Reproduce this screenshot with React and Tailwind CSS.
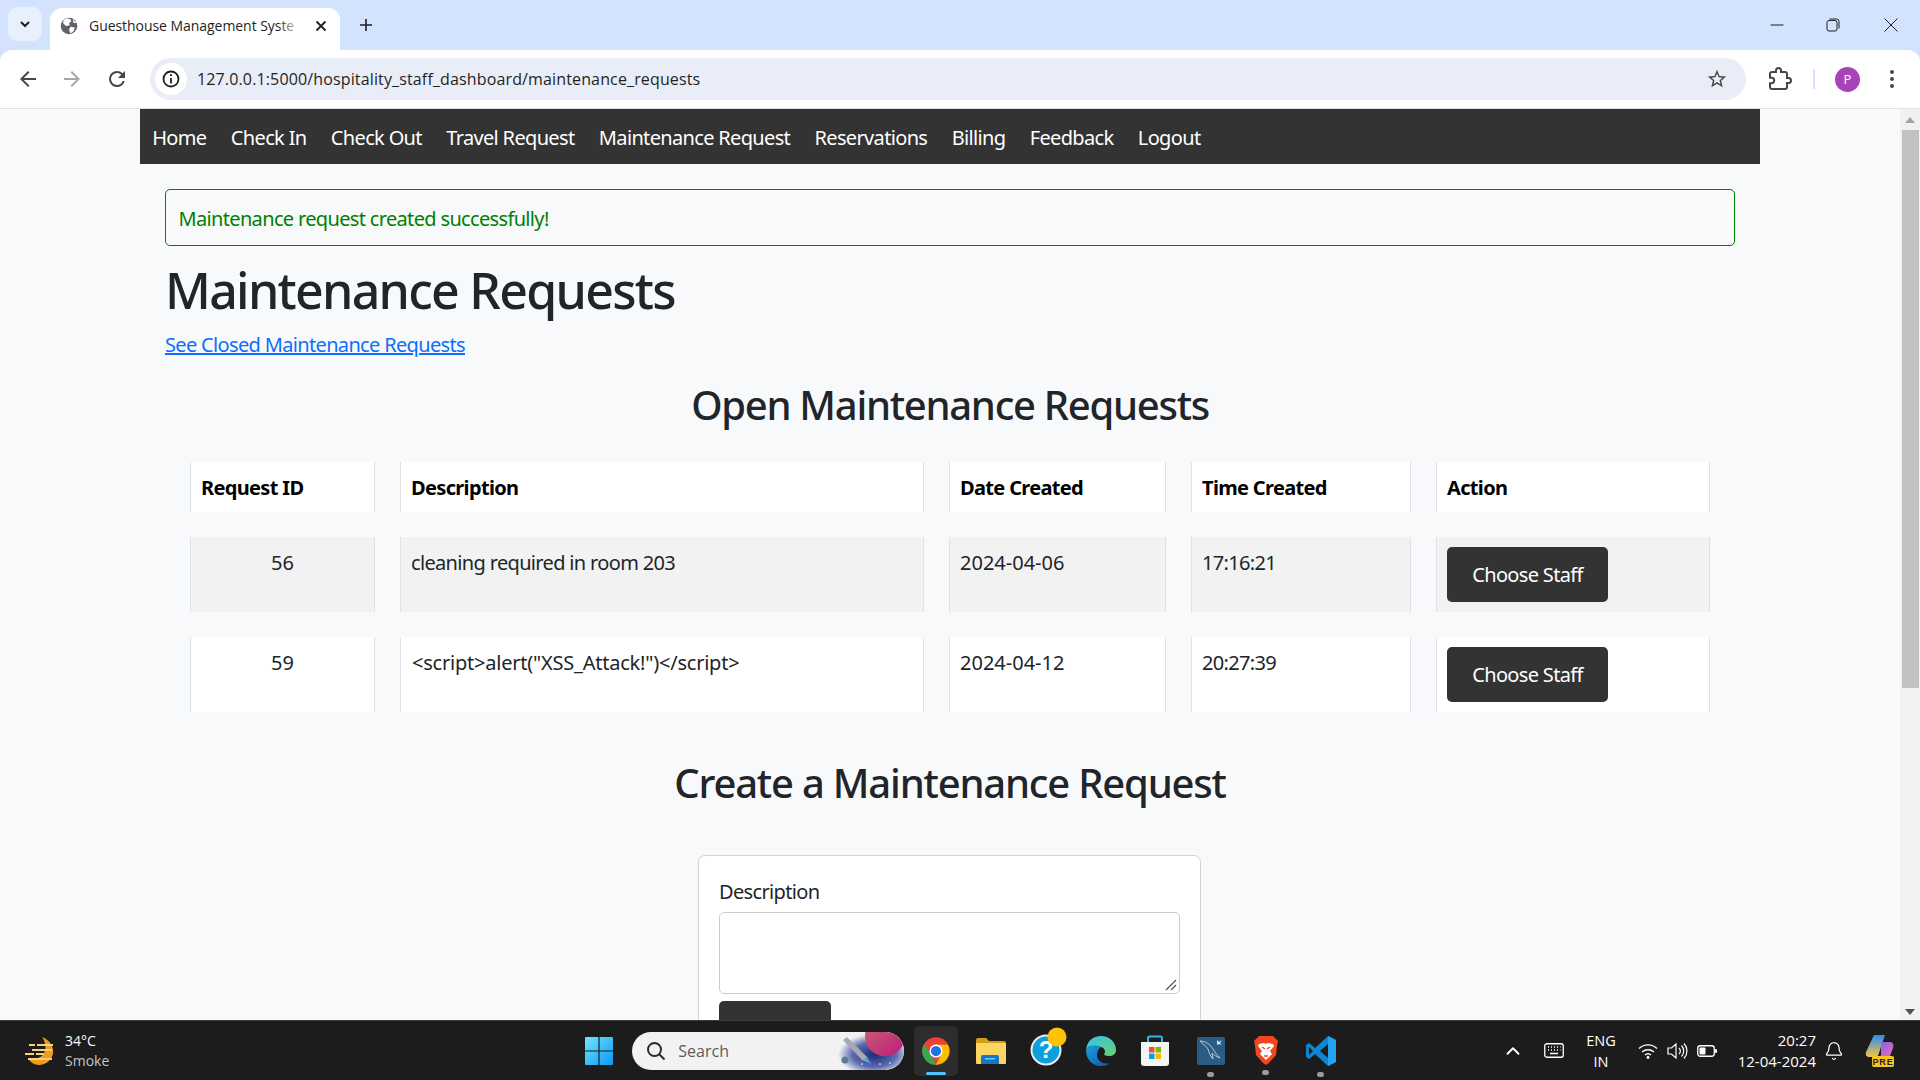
import { Bell, ChevronUp } from 'lucide-react';

const navItems = ['Home', 'Check In', 'Check Out', 'Travel Request', 'Maintenance Request', 'Reservations', 'Billing', 'Feedback', 'Logout'];

const rows = [
  { id: 56, desc: 'cleaning required in room 203', descCls: '', date: '2024-04-06', time: '17:16:21', bg: 'bg-[#f2f2f2]' },
  { id: 59, desc: '<script>alert("XSS_Attack!")</script>', descCls: 'tracking-[-0.011em] indent-[1px]', date: '2024-04-12', time: '20:27:39', bg: 'bg-white' },
];

const cellCls = 'border-x border-[#dee2e6] px-[10px] pt-[11px] pb-[9px] align-top';

const Chrome = () => (
  <svg width="30" height="30" viewBox="0 0 48 48">
    <circle cx="24" cy="24" r="22" fill="#ea4335" />
    <path d="M4.9 13 L15.4 29 L24 46 A22 22 0 0 1 4.9 13Z" fill="#34a853" />
    <path d="M24 14 H43.1 A22 22 0 0 1 24 46 L32.6 29Z" fill="#fbbc04" />
    <circle cx="24" cy="24" r="10.5" fill="#fff" />
    <circle cx="24" cy="24" r="8.2" fill="#1a73e8" />
  </svg>
);

const TabGlobe = () => (
  <svg width="18" height="18" viewBox="0 0 24 24">
    <circle cx="12" cy="12" r="11" fill="#5f6368" />
    <path d="M9 1.5 L14 3 L15 6 L12 8 L13 11 L8 12 L4 8 L5 4Z M14 13 L20 14 L18 19 L14 22 L12 17Z M17 3 L22 8 L18 8Z" fill="#fff" />
  </svg>
);

const Windows = () => (
  <svg width="30" height="30" viewBox="0 0 30 30">
    <defs>
      <linearGradient id="winGrad" x1="0" y1="0" x2="1" y2="1">
        <stop offset="0" stopColor="#72e4ff" />
        <stop offset="1" stopColor="#0a98f5" />
      </linearGradient>
    </defs>
    <path d="M1 2a1 1 0 0 1 1-1h12.4v13.4H1z M15.6 1H28a1 1 0 0 1 1 1v12.4H15.6z M1 15.6h13.4V29H2a1 1 0 0 1-1-1z M15.6 15.6H29V28a1 1 0 0 1-1 1H15.6z" fill="url(#winGrad)" />
  </svg>
);

const Folder = () => (
  <svg width="32" height="30" viewBox="0 0 32 30">
    <path d="M1 4a2 2 0 0 1 2-2h8l3 3h15a2 2 0 0 1 2 2v3H1z" fill="#d69e12" />
    <path d="M1 7h29a1 1 0 0 1 1 1v19a1 1 0 0 1-1 1H2a1 1 0 0 1-1-1z" fill="#fcd462" />
    <path d="M6 21a2 2 0 0 1 2-2h14a2 2 0 0 1 2 2v7H6z" fill="#1478c8" />
    <rect x="10" y="22" width="10" height="1.5" fill="#7cc4f4" />
  </svg>
);

const Help = () => (
  <svg width="38" height="40" viewBox="0 0 38 40">
    <circle cx="16" cy="23" r="14.5" fill="#0d9fdc" stroke="#e8eef2" strokeWidth="2" />
    <text x="16" y="31" textAnchor="middle" fontSize="24" fontWeight="700" fontFamily="Liberation Sans, sans-serif" fill="#fff">?</text>
    <circle cx="27" cy="10" r="9.5" fill="#ffc107" />
  </svg>
);

const Edge = () => (
  <svg width="32" height="32" viewBox="0 0 32 32">
    <defs>
      <linearGradient id="edgeA" x1="0" y1="0" x2="1" y2="1">
        <stop offset="0" stopColor="#35c1f1" />
        <stop offset="1" stopColor="#66d36e" />
      </linearGradient>
      <linearGradient id="edgeB" x1="0" y1="0" x2="1" y2="1">
        <stop offset="0" stopColor="#1b9de2" />
        <stop offset="1" stopColor="#0c59a4" />
      </linearGradient>
    </defs>
    <path d="M1 15C2 6 8 1 16 1c8 0 15 6 15 14 0 4-3 6-7 6-3 0-5-1-5-2 2-2 1-6-3-7C9 10 3 10 1 15Z" fill="url(#edgeA)" />
    <path d="M1 15c0 9 6 16 15 16 4 0 7-1 9-3-7 2-13-2-13-8 0-4 2-7 4-8C9 10 3 10 1 15Z" fill="url(#edgeB)" />
  </svg>
);

const Store = () => (
  <svg width="30" height="32" viewBox="0 0 30 32">
    <path d="M8 8V3a1.5 1.5 0 0 1 1.5-1.5h11A1.5 1.5 0 0 1 22 3v5" fill="none" stroke="#2fb5ec" strokeWidth="2" />
    <path d="M1 7h28v21a3 3 0 0 1-3 3H4a3 3 0 0 1-3-3z" fill="#f4f4f4" />
    <rect x="9" y="12" width="5.5" height="5.5" fill="#f25022" />
    <rect x="15.5" y="12" width="5.5" height="5.5" fill="#7fba00" />
    <rect x="9" y="18.5" width="5.5" height="5.5" fill="#00a4ef" />
    <rect x="15.5" y="18.5" width="5.5" height="5.5" fill="#ffb900" />
  </svg>
);

const MySql = () => (
  <svg width="30" height="30" viewBox="0 0 30 30">
    <rect x="1" y="1" width="28" height="28" rx="2" fill="#2b5d84" />
    <path d="M4 5c5 0 10 3 13 8 2 3 4 6 7 9-3-1-6-3-8-5l1 6c-2-2-4-6-5-10-2-3-5-5-8-8Z" fill="none" stroke="#b9cbd8" strokeWidth="1" />
    <path d="M21 4l2 2 3-2-2 3 2 2-3-1-2 1z" fill="#dfe8ee" />
  </svg>
);

const Brave = () => (
  <svg width="26" height="31" viewBox="0 0 26 31">
    <path d="M6 1h14l3 3 2 2-1 5-1 9-7 8-3 2-3-2-7-8-1-9-1-5 2-2z" fill="#f1461e" />
    <path d="M6 9l5-1 2 1 2-1 5 1 1 2-4 5 2 3-3 3-3 3-3-3-3-3 2-3-4-5z" fill="#fff" />
    <path d="M9 12l3 2M17 12l-3 2M11 21h4" stroke="#f1461e" strokeWidth="1.4" />
  </svg>
);

const VsCode = () => (
  <svg width="32" height="32" viewBox="0 0 32 32">
    <path d="M23 1 L31 5 V27 L23 31 L10 19 L4 24 L1 22 V10 L4 8 L10 13Z M23 9 L15 16 L23 23Z M4 12 V20 L8 16Z" fillRule="evenodd" fill="#0f85d1" />
    <path d="M23 1 L31 5 V27 L23 31Z M23 9 V23 L23 23Z" fill="#24a3ef" />
  </svg>
);

const Copilot = () => (
  <svg width="30" height="34" viewBox="0 0 30 34">
    <defs>
      <linearGradient id="copA" x1="0" y1="0" x2="0" y2="1">
        <stop offset="0" stopColor="#2b8bf0" />
        <stop offset="1" stopColor="#f3c544" />
      </linearGradient>
      <linearGradient id="copB" x1="0" y1="0" x2="1" y2="1">
        <stop offset="0" stopColor="#7a5ff0" />
        <stop offset="1" stopColor="#ef6fb0" />
      </linearGradient>
    </defs>
    <path d="M9 1h11l-6 18c-1 3-2 4-5 4H4c-2 0-4-2-3-5z" fill="url(#copA)" />
    <path d="M16 8h9c3 0 4 3 3 6l-3 8c-1 2-2 3-4 3H11c3 0 4-2 5-4z" fill="url(#copB)" />
    <rect x="7" y="22" width="22" height="11" rx="2" fill="#f7c325" />
    <text x="18" y="31" textAnchor="middle" fontSize="9" fontWeight="700" fontFamily="Liberation Sans, sans-serif" letterSpacing="0.8" fill="#222">PRE</text>
  </svg>
);

const Weather = () => (
  <svg width="32" height="30" viewBox="0 0 32 30">
    <path d="M18 1c8 3 12 10 11 17-2 7-8 11-14 11-5 0-9-3-11-7h10c8-2 10-13 4-21Z" fill="#f29a1f" />
    <path d="M5 8h6v2H5z M13 8h16v2H13z M8 13h20v2H8z M1 17h9v2H1z M12 17h8v2h-8z M4 22h24v2H4z" fill="#f5d37e" />
  </svg>
);

const Bloom = () => (
  <svg width="66" height="38" viewBox="0 0 66 38">
    <defs>
      <radialGradient id="bloomBg" cx="0.55" cy="0.6" r="0.55">
        <stop offset="0" stopColor="#1d2a78" />
        <stop offset="0.6" stopColor="#5c6cb0" />
        <stop offset="1" stopColor="#f2f2f2" />
      </radialGradient>
      <linearGradient id="planet" x1="0" y1="0" x2="1" y2="1">
        <stop offset="0" stopColor="#c86a6a" />
        <stop offset="1" stopColor="#c0187f" />
      </linearGradient>
    </defs>
    <rect x="0" y="0" width="66" height="38" fill="url(#bloomBg)" />
    <circle cx="47" cy="4" r="20" fill="url(#planet)" />
    <path d="M5 8 L9 5 L29 25 L29 30 L24 28Z" fill="#a9a9b4" />
    <path d="M25 28 L33 32 L29 25Z" fill="#4aa8e8" />
    <circle cx="7" cy="28" r="3.5" fill="#5a7b93" />
    <circle cx="24" cy="32" r="0.8" fill="#fff" />
    <circle cx="42" cy="32" r="0.8" fill="#fff" />
    <circle cx="52" cy="31" r="0.8" fill="#fff" />
  </svg>
);

const App = () => {
  return (
    <div className="flex h-screen flex-col overflow-hidden bg-[#f8f9fa] font-['Noto_Sans',sans-serif] text-[20px] leading-[30px] tracking-[-0.033em] text-[#212529]">
      {/* browser chrome */}
      <div className="h-[109px] shrink-0 bg-[#d3e3fd] tracking-normal">
        <div className="flex h-[50px] items-end">
          <div className="mb-[9px] ml-[8px] flex h-[34px] w-[34px] items-center justify-center rounded-[9px] bg-[#e8effd]">
            <svg width="12" height="12" viewBox="0 0 12 12"><path d="M2 4l4 4 4-4" fill="none" stroke="#1f1f1f" strokeWidth="2" /></svg>
          </div>
          <div className="ml-[8px] flex h-[42px] w-[290px] items-center rounded-t-[12px] bg-white pb-[6px] pl-[10px] text-[#1f1f1f]">
            <TabGlobe />
            <div className="relative ml-[11px] w-[213px] whitespace-nowrap font-['Open_Sans',sans-serif] text-[14px] tracking-[-0.05px]">
              Guesthouse Management Syste
              <div className="absolute right-0 top-0 h-full w-[24px] bg-gradient-to-r from-transparent to-white" />
            </div>
            <div className="ml-[13px]">
              <svg width="12" height="12" viewBox="0 0 12 12"><path d="M1.5 1.5l9 9M10.5 1.5l-9 9" stroke="#1f1f1f" strokeWidth="1.8" /></svg>
            </div>
          </div>
          <div className="mb-[8px] ml-[19px] flex h-[34px] w-[14px] items-center">
            <svg width="14" height="14" viewBox="0 0 14 14"><path d="M7 1v12M1 7h12" stroke="#1f1f1f" strokeWidth="1.6" /></svg>
          </div>
          <div className="mb-[18px] ml-auto flex items-center">
            <svg className="mr-[42px]" width="14" height="14" viewBox="0 0 14 14"><path d="M0.5 7h13" stroke="#1f1f1f" strokeWidth="1" /></svg>
            <svg className="mr-[44px]" width="14" height="14" viewBox="0 0 14 14"><rect x="1" y="2.5" width="10" height="10.5" rx="2" fill="none" stroke="#1f1f1f" /><path d="M3.5 1h7a2.5 2.5 0 0 1 2.5 2.5v7" fill="none" stroke="#1f1f1f" /></svg>
            <svg className="mr-[22px]" width="14" height="14" viewBox="0 0 14 14"><path d="M0.5 0.5l13 13M13.5 0.5l-13 13" stroke="#1f1f1f" strokeWidth="1" /></svg>
          </div>
        </div>
        <div className="flex h-[59px] items-center rounded-t-[12px] border-b border-[#dfe1e5] bg-white">
          <svg className="ml-[16px]" width="24" height="24" viewBox="0 0 24 24"><path d="M20 11H7.83l5.59-5.59L12 4l-8 8 8 8 1.41-1.41L7.83 13H20z" fill="#474747" /></svg>
          <svg className="ml-[20px]" width="24" height="24" viewBox="0 0 24 24"><path d="M4 11h12.17l-5.59-5.59L12 4l8 8-8 8-1.41-1.41L16.17 13H4z" fill="#a7a7a7" /></svg>
          <svg className="ml-[21px]" width="24" height="24" viewBox="0 0 24 24"><path d="M17.65 6.35A7.95 7.95 0 0 0 12 4a8 8 0 1 0 7.75 10h-2.08A6 6 0 1 1 12 6c1.66 0 3.14.69 4.22 1.78L13 11h7V4z" fill="#474747" /></svg>
          <div className="ml-[21px] flex h-[42px] w-[1596px] items-center rounded-full bg-[#e9edf7] pl-[5px] pr-[18px]">
            <div className="flex h-[32px] w-[32px] items-center justify-center rounded-full bg-white">
              <svg width="18" height="18" viewBox="0 0 18 18"><circle cx="9" cy="9" r="7.5" fill="none" stroke="#1f1f1f" strokeWidth="1.8" /><path d="M9 8v5.5" stroke="#1f1f1f" strokeWidth="1.8" /><circle cx="9" cy="5.2" r="1.1" fill="#1f1f1f" /></svg>
            </div>
            <span className="ml-[10px] font-['Open_Sans',sans-serif] text-[16px] tracking-[0.14px] text-[#1f1f1f]">127.0.0.1:5000/hospitality_staff_dashboard/maintenance_requests</span>
            <svg className="ml-auto" width="22" height="22" viewBox="0 0 24 24"><path d="M22 9.24l-7.19-.62L12 2 9.19 8.63 2 9.24l5.46 4.73L5.82 21 12 17.27 18.18 21l-1.63-7.03L22 9.24zM12 15.4l-3.76 2.27 1-4.28-3.32-2.88 4.38-.38L12 6.1l1.71 4.04 4.38.38-3.32 2.88 1 4.28L12 15.4z" fill="#474747" /></svg>
          </div>
          <svg className="ml-[22px]" width="24" height="24" viewBox="0 0 24 24"><path d="M20.5 11H19V7c0-1.1-.9-2-2-2h-4V3.5C13 2.12 11.88 1 10.5 1S8 2.12 8 3.5V5H4c-1.1 0-1.99.9-1.99 2v3.8H3.5c1.49 0 2.7 1.21 2.7 2.7s-1.21 2.7-2.7 2.7H2V20c0 1.1.9 2 2 2h13c1.1 0 2-.9 2-2v-4h1.5c1.38 0 2.5-1.12 2.5-2.5S21.88 11 20.5 11z" fill="none" stroke="#474747" strokeWidth="2" /></svg>
          <div className="ml-[21px] h-[20px] w-[2px] bg-[#d3e3fd]" />
          <div className="ml-[20px] flex h-[25px] w-[25px] items-center justify-center rounded-full bg-[#a842b8] font-['Open_Sans',sans-serif] text-[13px] leading-none text-white">P</div>
          <svg className="ml-[29px]" width="6" height="20" viewBox="0 0 6 20"><circle cx="3" cy="3" r="2" fill="#474747" /><circle cx="3" cy="10" r="2" fill="#474747" /><circle cx="3" cy="17" r="2" fill="#474747" /></svg>
        </div>
      </div>

      {/* page + scrollbar */}
      <div className="flex min-h-0 flex-1">
        <div className="min-w-0 flex-1 overflow-hidden">
          <div className="mx-auto w-[1620px]">
            <nav className="flex h-[55px] bg-[#333333]">
              {navItems.map((item) => (
                <a key={item} className="px-[12.2px] pt-[14px] text-white">{item}</a>
              ))}
            </nav>

            <div className="px-[25px] pt-[25px]">
              <div className="h-[57px] rounded-[5px] border border-[#008000] px-[12.5px] pt-[14px] text-[#008000]">
                Maintenance request created successfully!
              </div>
              <h1 className="mt-[14px] text-[50px] font-medium leading-[60px] tracking-[-0.034em]">Maintenance Requests</h1>
              <a className="mt-[10px] block text-[#0d6efd] underline">See Closed Maintenance Requests</a>

              <h2 className="mt-[21px] text-center text-[40px] font-medium leading-[48px] tracking-[-0.032em]">Open Maintenance Requests</h2>

              <table className="mt-[8px] w-[1570px] table-fixed border-separate border-spacing-[25px]">
                <colgroup>
                  <col className="w-[185px]" />
                  <col className="w-[524px]" />
                  <col className="w-[217px]" />
                  <col className="w-[220px]" />
                  <col className="w-[274px]" />
                </colgroup>
                <thead>
                  <tr className="bg-white text-left font-bold text-black">
                    <th className={cellCls}>Request ID</th>
                    <th className={cellCls}>Description</th>
                    <th className={cellCls}>Date Created</th>
                    <th className={cellCls}>Time Created</th>
                    <th className={cellCls}>Action</th>
                  </tr>
                </thead>
                <tbody>
                  {rows.map((r) => (
                    <tr key={r.id}>
                      <td className={`${cellCls} ${r.bg} text-center tracking-normal`}>{r.id}</td>
                      <td className={`${cellCls} ${r.bg} ${r.descCls}`}>{r.desc}</td>
                      <td className={`${cellCls} ${r.bg} tracking-normal`}>{r.date}</td>
                      <td className={`${cellCls} ${r.bg}`}>{r.time}</td>
                      <td className={`border-x border-[#dee2e6] p-[10px] align-top ${r.bg}`}>
                        <button className="h-[55px] w-[161px] rounded-[5px] bg-[#333333] text-white">Choose Staff</button>
                      </td>
                    </tr>
                  ))}
                </tbody>
              </table>

              <h2 className="mt-[22px] text-center text-[40px] font-medium leading-[48px] tracking-[-0.03em]">Create a Maintenance Request</h2>

              <div className="ml-[533px] mt-[48px] w-[503px] rounded-[7px] border border-[#d3d3d3] bg-white px-[20px] pt-[21px]">
                <label className="block">Description</label>
                <div className="relative mt-[5px] h-[82px] rounded-[5px] border border-[#cccccc] bg-white">
                  <svg className="absolute bottom-[2px] right-[2px]" width="12" height="12" viewBox="0 0 12 12"><path d="M1 11L11 1M6 11l5-5" stroke="#555" strokeWidth="1.2" /></svg>
                </div>
                <div className="mt-[7px] h-[55px] w-[112px] rounded-[5px] bg-[#333333]" />
              </div>
            </div>
          </div>
        </div>
        <div className="flex w-[20px] shrink-0 flex-col items-center bg-[#f1f1f1]">
          <svg className="mt-[8px]" width="10" height="6" viewBox="0 0 10 6"><path d="M5 0l5 6H0z" fill="#a3a3a3" /></svg>
          <div className="mt-[7px] h-[558px] w-[17px] bg-[#c1c1c1]" />
          <svg className="mb-[5px] mt-auto" width="10" height="6" viewBox="0 0 10 6"><path d="M5 6l5-6H0z" fill="#505050" /></svg>
        </div>
      </div>

      {/* taskbar */}
      <div className="flex h-[60px] shrink-0 items-center border-t border-[#3b3b3b] bg-[#1c1c1c] font-['Open_Sans',sans-serif] tracking-normal text-white">
        <div className="ml-[24px] flex items-center">
          <Weather />
          <div className="ml-[9px] text-[14px] leading-[20px]">
            <div>34°C</div>
            <div className="text-[#c6c6c6]">Smoke</div>
          </div>
        </div>

        <div className="ml-[475px] flex items-center">
          <Windows />
          <div className="ml-[18px] flex h-[38px] w-[272px] items-center overflow-hidden rounded-full bg-[#f2f2f2] pl-[14px] text-[#5c5c5c]">
            <svg width="20" height="20" viewBox="0 0 20 20"><circle cx="8.5" cy="8.5" r="6.5" fill="none" stroke="#2b2b2b" strokeWidth="2" /><path d="M13 13l5.5 5.5" stroke="#2b2b2b" strokeWidth="2" /></svg>
            <span className="ml-[12px] text-[16px]">Search</span>
            <div className="ml-auto"><Bloom /></div>
          </div>
          <div className="relative ml-[10px] flex h-[50px] w-[44px] items-center justify-center rounded-[5px] bg-[#2d2d2d]">
            <Chrome />
            <div className="absolute bottom-[1px] h-[3px] w-[20px] rounded-full bg-[#4cc2ff]" />
          </div>
          <div className="ml-[17px]"><Folder /></div>
          <div className="mb-[8px] ml-[23px]"><Help /></div>
          <div className="ml-[17px]"><Edge /></div>
          <div className="ml-[23px]"><Store /></div>
          <div className="relative ml-[26px]">
            <MySql />
            <div className="absolute bottom-[-11px] left-[11px] h-[5px] w-[7px] rounded-full bg-[#9b9b9b]" />
          </div>
          <div className="relative ml-[27px]">
            <Brave />
            <div className="absolute bottom-[-9px] left-[9px] h-[5px] w-[7px] rounded-full bg-[#9b9b9b]" />
          </div>
          <div className="relative ml-[26px]">
            <VsCode />
            <div className="absolute bottom-[-10px] left-[12px] h-[5px] w-[7px] rounded-full bg-[#9b9b9b]" />
          </div>
        </div>

        <div className="ml-auto flex items-center">
          <ChevronUp size={22} strokeWidth={2} />
          <svg className="ml-[20px]" width="20" height="15" viewBox="0 0 20 15"><rect x="0.75" y="0.75" width="18.5" height="13.5" rx="2" fill="none" stroke="#fff" strokeWidth="1.3" /><path d="M4 4h1M7 4h1M10 4h1M13 4h1M16 4h0.5M4 7h1M7 7h1M10 7h1M13 7h1M16 7h0.5M6 10.5h8" stroke="#fff" strokeWidth="1.3" /></svg>
          <div className="ml-[22px] w-[30px] whitespace-nowrap text-center text-[14.5px] leading-[21px]">ENG<br />IN</div>
          <svg className="ml-[22px]" width="20" height="18" viewBox="0 0 20 18"><path d="M1 6.5a13 13 0 0 1 18 0M4 10a9 9 0 0 1 12 0M7 13a4.5 4.5 0 0 1 6 0" fill="none" stroke="#fff" strokeWidth="1.4" /><circle cx="10" cy="15.5" r="1.4" fill="#fff" /></svg>
          <svg className="ml-[9px]" width="21" height="18" viewBox="0 0 21 18"><path d="M1 6h3.5L9 2v14l-4.5-4H1z M12 6a4 4 0 0 1 0 6M14.5 3.5a8 8 0 0 1 0 11M17 1.5a11 11 0 0 1 0 15" fill="none" stroke="#fff" strokeWidth="1.2" /></svg>
          <svg className="ml-[9px]" width="20" height="14" viewBox="0 0 20 14"><rect x="0.75" y="1.75" width="16.5" height="10.5" rx="2.5" fill="none" stroke="#fff" strokeWidth="1.3" /><rect x="2.5" y="3.5" width="6" height="7" rx="1" fill="#fff" /><rect x="18" y="5" width="2" height="4" rx="1" fill="#fff" /></svg>
          <div className="ml-[19px] w-[80px] whitespace-nowrap text-right text-[15px] leading-[21px]">
            20:27
            <br />
            12-04-2024
          </div>
          <Bell className="ml-[8px]" size={20} strokeWidth={1.5} />
          <div className="ml-[21px] mr-[25px]"><Copilot /></div>
        </div>
      </div>
    </div>
  );
};

export default App;
